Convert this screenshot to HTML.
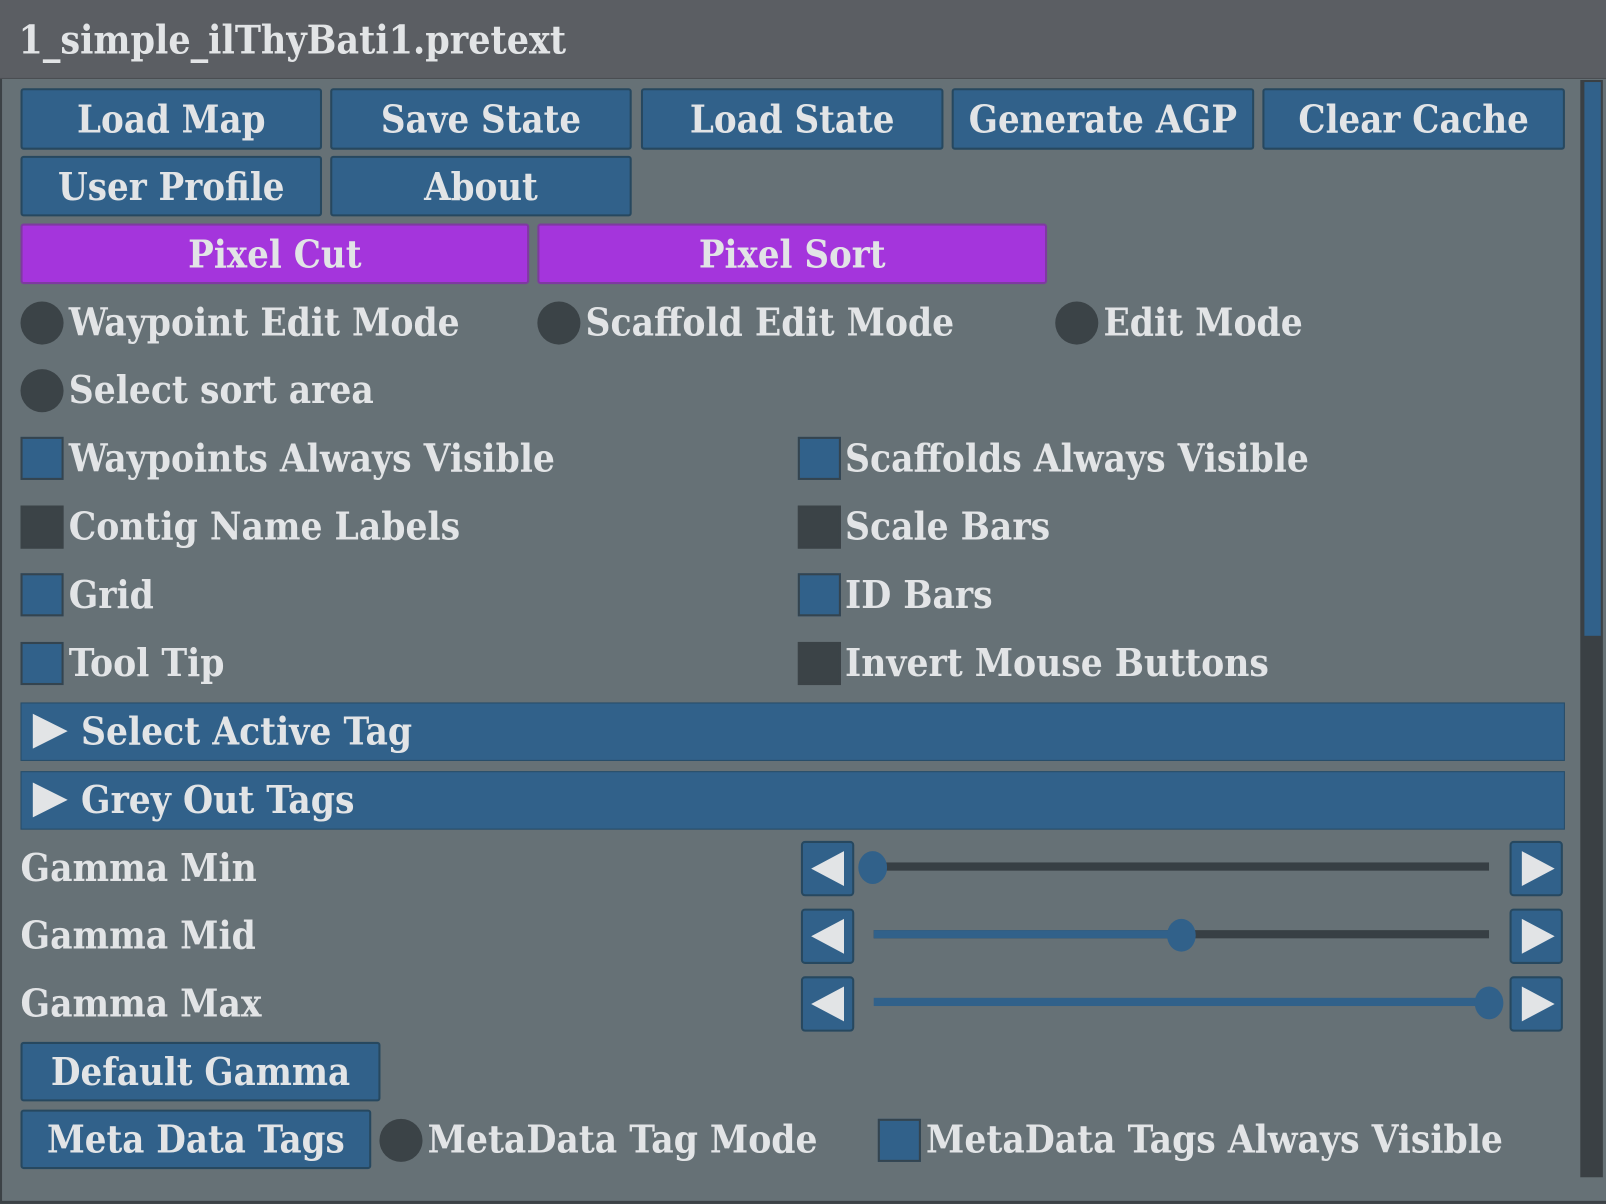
<!DOCTYPE html>
<html><head><meta charset="utf-8"><style>
html,body{margin:0;padding:0;width:1606px;height:1204px;overflow:hidden;background:#5c646a}
#w{position:absolute;left:0;top:0;width:1566px;height:1174px;transform:scale(1.0255,1.0255);transform-origin:0 0;background:#667176;font-family:"DejaVu Serif","Liberation Serif",serif;font-weight:bold;font-stretch:condensed;color:#e2e4e6;box-shadow:inset 2px -3px 0 #3c4246}
.a{position:absolute}
.t{position:absolute;font-size:37.5px;line-height:40px;white-space:nowrap}
.b{position:absolute;background:#31618a;border:2px solid #27485f;border-radius:3px;box-sizing:border-box;font-size:37px;display:flex;align-items:center;justify-content:center;white-space:nowrap}
.p{background:#a435dc;border-color:#7e3aa0}
.r{position:absolute;width:42px;height:42px;border-radius:50%;background:#3b4347}
.c{position:absolute;width:42px;height:42px;box-sizing:border-box;border:2px solid #34444f;background:#31618a}
.d{background:#3b4347;border-color:#3b4347}
.h{position:absolute;left:20px;width:1506px;height:57px;background:#31618a;border:1px solid #284d68;box-sizing:border-box}
.tri{position:absolute;left:11px;top:10px;width:0;height:0;border-top:17px solid transparent;border-bottom:17px solid transparent;border-left:34px solid #e2e4e6}
.ab{position:absolute;width:52px;height:54px;background:#31618a;border:2px solid #27485f;border-radius:4px;box-sizing:border-box}
.ab.l:after{content:"";position:absolute;left:8px;top:8px;border-top:17px solid transparent;border-bottom:17px solid transparent;border-right:32px solid #e2e4e6}
.ab.rr:after{content:"";position:absolute;left:10px;top:8px;border-top:17px solid transparent;border-bottom:17px solid transparent;border-left:32px solid #e2e4e6}
.tr{position:absolute;left:852px;width:600px;height:8px;background:#373f44}
.fill{position:absolute;left:852px;height:8px;background:#31618a}
.k{position:absolute;width:28px;height:32px;border-radius:50%;background:#31618a}
</style></head><body><div id="w">
<div class="a" style="left:0;top:0;width:1566px;height:76px;background:#5b5e63;border-bottom:1px solid #4a4d51"></div>
<div class="t" style="left:18px;top:19px;font-size:38px">1_simple_ilThyBati1.pretext</div>
<div class="a" style="left:1541px;top:78px;width:22px;height:1070px;background:#3a4044"></div>
<div class="a" style="left:1545px;top:80px;width:16px;height:540px;background:#31618a"></div>

<div class="b" style="left:20px;top:86px;width:294px;height:60px">Load Map</div>
<div class="b" style="left:322px;top:86px;width:294px;height:60px">Save State</div>
<div class="b" style="left:625px;top:86px;width:295px;height:60px">Load State</div>
<div class="b" style="left:928px;top:86px;width:295px;height:60px">Generate AGP</div>
<div class="b" style="left:1231px;top:86px;width:295px;height:60px">Clear Cache</div>
<div class="b" style="left:20px;top:152px;width:294px;height:59px">User Profile</div>
<div class="b" style="left:322px;top:152px;width:294px;height:59px">About</div>
<div class="b p" style="left:20px;top:218px;width:496px;height:59px">Pixel Cut</div>
<div class="b p" style="left:524px;top:218px;width:497px;height:59px">Pixel Sort</div>

<div class="r" style="left:20px;top:294px"></div><div class="t" style="left:67px;top:294px">Waypoint Edit Mode</div>
<div class="r" style="left:524px;top:294px"></div><div class="t" style="left:571px;top:294px">Scaffold Edit Mode</div>
<div class="r" style="left:1029px;top:294px"></div><div class="t" style="left:1076px;top:294px">Edit Mode</div>
<div class="r" style="left:20px;top:360px"></div><div class="t" style="left:67px;top:360px">Select sort area</div>

<div class="c" style="left:20px;top:426px"></div><div class="t" style="left:67px;top:427px">Waypoints Always Visible</div>
<div class="c" style="left:778px;top:426px"></div><div class="t" style="left:824px;top:427px">Scaffolds Always Visible</div>
<div class="c d" style="left:20px;top:493px"></div><div class="t" style="left:67px;top:493px">Contig Name Labels</div>
<div class="c d" style="left:778px;top:493px"></div><div class="t" style="left:824px;top:493px">Scale Bars</div>
<div class="c" style="left:20px;top:559px"></div><div class="t" style="left:67px;top:560px">Grid</div>
<div class="c" style="left:778px;top:559px"></div><div class="t" style="left:824px;top:560px">ID Bars</div>
<div class="c" style="left:20px;top:626px"></div><div class="t" style="left:67px;top:626px">Tool Tip</div>
<div class="c d" style="left:778px;top:626px"></div><div class="t" style="left:824px;top:626px">Invert Mouse Buttons</div>

<div class="h" style="top:685px"><div class="tri"></div><div class="t" style="left:58px;top:7px">Select Active Tag</div></div>
<div class="h" style="top:752px"><div class="tri"></div><div class="t" style="left:58px;top:7px">Grey Out Tags</div></div>

<div class="t" style="left:20px;top:826px">Gamma Min</div>
<div class="ab l" style="left:781px;top:820px"></div>
<div class="tr" style="top:841px"></div><div class="k" style="left:837px;top:830px"></div>
<div class="ab rr" style="left:1472px;top:820px"></div>

<div class="t" style="left:20px;top:892px">Gamma Mid</div>
<div class="ab l" style="left:781px;top:886px"></div>
<div class="tr" style="top:907px"></div><div class="fill" style="top:907px;width:300px"></div><div class="k" style="left:1138px;top:896px"></div>
<div class="ab rr" style="left:1472px;top:886px"></div>

<div class="t" style="left:20px;top:958px">Gamma Max</div>
<div class="ab l" style="left:781px;top:952px"></div>
<div class="fill" style="top:973px;width:600px"></div><div class="k" style="left:1438px;top:962px"></div>
<div class="ab rr" style="left:1472px;top:952px"></div>

<div class="b" style="left:20px;top:1016px;width:351px;height:58px">Default Gamma</div>
<div class="b" style="left:20px;top:1082px;width:342px;height:58px">Meta Data Tags</div>
<div class="r" style="left:370px;top:1091px"></div><div class="t" style="left:417px;top:1091px">MetaData Tag Mode</div>
<div class="c" style="left:856px;top:1091px"></div><div class="t" style="left:903px;top:1091px">MetaData Tags Always Visible</div>
</div></body></html>
